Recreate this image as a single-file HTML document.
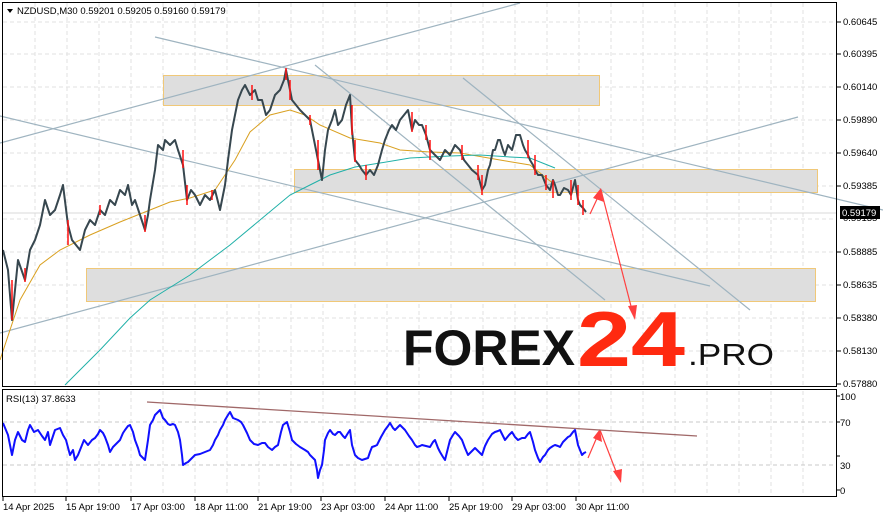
<!DOCTYPE html>
<html><head><meta charset="utf-8"><style>
html,body{margin:0;padding:0;background:#fff;}
svg{display:block;font-family:"Liberation Sans",sans-serif;}
</style></head><body>
<svg width="883" height="518" viewBox="0 0 883 518" xmlns="http://www.w3.org/2000/svg">
<rect width="883" height="518" fill="#fff"/>
<g stroke="#e2e2e2" stroke-dasharray="4,3" stroke-width="1">
<path d="M35,3V386M67,3V386M99,3V386M131,3V386M163,3V386M195,3V386M227,3V386M259,3V386M291,3V386M323,3V386M355,3V386M387,3V386M419,3V386M451,3V386M483,3V386M515,3V386M547,3V386M579,3V386M611,3V386M643,3V386M675,3V386M707,3V386M739,3V386M771,3V386M803,3V386"/>
<path d="M3,22H836M3,54H836M3,87H836M3,120H836M3,153H836M3,186H836M3,219H836M3,252H836M3,285H836M3,318H836M3,351H836"/>
<path d="M35,391V496M67,391V496M99,391V496M131,391V496M163,391V496M195,391V496M227,391V496M259,391V496M291,391V496M323,391V496M355,391V496M387,391V496M419,391V496M451,391V496M483,391V496M515,391V496M547,391V496M579,391V496M611,391V496M643,391V496M675,391V496M707,391V496M739,391V496M771,391V496M803,391V496"/>
</g>
<g stroke="#c8c8c8" stroke-dasharray="4,3"><path d="M3,422H836M3,465H836"/></g>
<g fill="#dedede" stroke="#f0c878" stroke-width="1">
<rect x="163.5" y="75.5" width="436" height="30"/>
<rect x="294.5" y="169.5" width="523" height="23"/>
<rect x="86.5" y="268.5" width="729" height="33"/>
</g>
<line x1="3" y1="213" x2="836" y2="213" stroke="#d8d8d8"/>
<g stroke="#9fb4c0" stroke-width="1.2" fill="none">
<line x1="0" y1="143" x2="520" y2="3"/>
<line x1="155" y1="37" x2="883" y2="210"/>
<line x1="0" y1="333" x2="798" y2="117"/>
<line x1="0" y1="116" x2="710" y2="286"/>
<line x1="315" y1="65" x2="605" y2="300"/>
<line x1="463" y1="78" x2="750" y2="310"/>
</g>
<polyline fill="none" stroke="#d9a020" stroke-width="1" points="0,360 20,300 40,265 60,250 90,235 120,222 150,210 170,202 190,198 215,190 235,160 250,132 270,115 290,110 305,115 320,125 350,138 380,143 400,150 430,152 460,153 500,160 530,165 555,185"/>
<polyline fill="none" stroke="#20b0a8" stroke-width="1" points="65,385 100,350 130,318 150,300 190,275 230,245 260,220 290,195 310,185 330,175 355,167 380,163 410,158 430,157 450,156 480,155 510,157 530,158 555,168"/>
<polyline fill="none" stroke="#37474f" stroke-width="2" stroke-linejoin="round" points="3,250 8,270 12,320 18,260 25,280 30,250 35,240 40,225 45,200 50,215 55,210 60,195 63,185 68,225 72,240 80,250 85,230 90,220 95,225 100,210 105,215 110,200 115,205 120,190 125,195 128,185 132,205 135,200 140,215 145,230 148,215 150,200 155,170 158,145 163,150 165,140 170,145 175,140 178,150 183,165 187,200 191,190 195,195 200,205 205,195 210,200 215,190 220,210 225,185 228,160 232,130 235,115 238,100 242,90 245,85 250,95 255,90 258,100 262,100 266,115 270,110 275,95 280,90 284,80 286,70 290,90 292,100 296,105 300,110 305,115 310,120 314,140 318,160 322,180 325,150 328,130 332,120 335,110 338,125 342,120 346,105 350,95 352,130 355,160 359,165 362,170 366,175 370,170 374,175 378,165 382,150 385,140 389,130 392,125 396,130 400,120 404,115 408,110 412,130 415,120 419,125 422,125 426,135 430,150 435,155 440,160 445,150 450,155 455,145 460,150 464,160 468,165 472,170 478,175 482,190 485,185 488,170 490,165 493,150 495,150 498,140 500,140 503,150 505,155 508,145 512,150 516,135 520,135 523,145 525,150 528,155 530,160 533,165 535,170 538,175 542,175 546,185 550,190 553,180 555,185 558,195 560,195 564,188 568,190 571,195 575,180 578,200 580,205 583,208 586,212"/>
<g stroke="#ff1010" stroke-width="1.5" fill="none">
<path d="M12,280V320M25,268V282M68,220V245M100,205V215M145,215V232M183,150V168M187,185V205M212,190V200M252,85V100M286,68V80M290,80V100M310,115V125M318,140V170M352,105V135M355,140V162M366,165V180M412,112V132M426,125V140M430,140V160M462,145V160M478,165V180M482,175V195M528,140V158M535,155V175M546,175V190M553,180V198M571,180V200M578,185V205M583,200V215"/>
</g>
<g stroke="#ff4040" stroke-width="1.2" fill="#ff4040">
<line x1="590" y1="214" x2="598" y2="197"/>
<polygon points="601,188 604,202 593,198" stroke="none"/>
<line x1="601" y1="190" x2="632" y2="310"/>
<polygon points="635,320 628,306 637,305" stroke="none"/>
<line x1="588" y1="458" x2="597" y2="437"/>
<polygon points="600,429 602,442 593,438" stroke="none"/>
<line x1="600" y1="430" x2="617" y2="474"/>
<polygon points="621,483 613,471 622,469" stroke="none"/>
</g>
<line x1="147" y1="402" x2="697" y2="436" stroke="#a06868" stroke-width="1.3"/>
<polyline fill="none" stroke="#1010ff" stroke-width="2" stroke-linejoin="round" points="3,423 8,435 12,455 15,440 18,432 22,440 25,442 28,430 30,425 34,432 38,430 42,436 45,440 48,432 50,445 55,430 60,428 63,435 66,440 70,455 73,450 75,460 78,455 80,450 84,440 88,445 92,440 95,438 98,434 100,430 103,433 105,437 108,445 110,452 113,447 115,445 118,442 120,440 123,433 125,430 128,426 130,425 133,432 135,440 138,448 140,455 143,458 145,460 148,440 150,425 153,420 155,415 158,412 160,410 163,418 165,420 168,424 170,425 173,424 175,425 178,432 180,440 182,455 183,465 186,463 188,462 192,458 195,455 200,454 205,452 210,450 213,445 215,440 218,435 220,430 223,425 225,420 228,415 230,412 233,418 238,420 241,422 243,425 247,433 250,440 254,444 258,445 262,443 265,443 268,447 272,450 275,447 278,445 281,432 283,425 287,422 290,432 292,440 296,444 300,447 305,450 308,452 310,455 313,458 315,460 317,470 318,478 320,470 322,465 324,450 325,440 328,433 330,430 333,434 335,435 338,432 340,432 343,436 345,438 348,433 350,430 352,445 355,455 358,458 362,460 365,459 368,458 370,452 372,447 375,446 377,445 381,437 385,430 388,426 390,423 393,428 395,430 398,427 400,425 403,428 405,430 409,436 412,440 415,445 417,447 420,446 422,445 426,446 430,447 433,442 435,440 438,448 440,452 443,457 445,460 448,448 450,440 453,435 455,432 459,436 462,440 465,448 468,455 472,451 475,448 479,452 482,455 485,446 488,440 492,434 495,432 498,431 500,430 503,436 505,440 509,435 512,432 515,437 518,440 522,438 525,438 528,434 530,432 533,442 535,450 538,458 540,462 543,457 545,455 548,450 550,448 553,446 555,445 558,446 560,447 563,442 565,440 568,437 570,436 573,432 575,430 577,440 578,445 580,450 582,455 584,453 586,452"/>
<rect x="2.5" y="2.5" width="834" height="384" fill="none" stroke="#000"/>
<rect x="2.5" y="389.5" width="834" height="107" fill="none" stroke="#000"/>
<g font-size="9.5" fill="#000">
<g stroke="#000"><path d="M837,22h4M837,54h4M837,87h4M837,120h4M837,153h4M837,186h4M837,252h4M837,285h4M837,318h4M837,351h4M837,384h4M837,396h3M837,422h3M837,456h3M837,490h3"/></g>
<text x="843" y="25">0.60645</text>
<text x="843" y="57">0.60395</text>
<text x="843" y="90">0.60140</text>
<text x="843" y="123">0.59890</text>
<text x="843" y="156">0.59640</text>
<text x="843" y="189">0.59385</text>
<text x="843" y="221">0.59135</text>
<text x="843" y="255">0.58885</text>
<text x="843" y="288">0.58635</text>
<text x="843" y="321">0.58380</text>
<text x="843" y="354">0.58130</text>
<text x="843" y="387">0.57880</text>
<rect x="840" y="206" width="40" height="13" fill="#000"/>
<text x="842" y="216" fill="#fff">0.59179</text>
<text x="840" y="400">100</text>
<text x="840" y="426">70</text>
<text x="840" y="469">30</text>
<text x="840" y="494">0</text>
</g>
<g stroke="#000"><path d="M3,497v4M66,497v4M131,497v4M195,497v4M258,497v4M321,497v4M385,497v4M449,497v4M512,497v4M576,497v4"/></g>
<g font-size="9.5" fill="#000">
<text x="3" y="510">14 Apr 2025</text>
<text x="66" y="510">15 Apr 19:00</text>
<text x="131" y="510">17 Apr 03:00</text>
<text x="195" y="510">18 Apr 11:00</text>
<text x="258" y="510">21 Apr 19:00</text>
<text x="321" y="510">23 Apr 03:00</text>
<text x="385" y="510">24 Apr 11:00</text>
<text x="449" y="510">25 Apr 19:00</text>
<text x="512" y="510">29 Apr 03:00</text>
<text x="576" y="510">30 Apr 11:00</text>
</g>
<polygon points="7,9 13,9 10,13" fill="#000"/>
<text x="17" y="14" font-size="9.5">NZDUSD,M30  0.59201 0.59205 0.59160 0.59179</text>
<text x="6" y="402" font-size="9.5">RSI(13) 37.8633</text>
<text x="403" y="365" font-size="50" font-weight="bold" fill="#111" textLength="172" lengthAdjust="spacingAndGlyphs">FOREX</text>
<text x="577" y="366" font-size="78" font-weight="bold" fill="#ff2a10" textLength="108" lengthAdjust="spacingAndGlyphs">24</text>
<text x="688" y="365" font-size="31" fill="#111" textLength="86" lengthAdjust="spacingAndGlyphs">.PRO</text>
</svg>
</body></html>
